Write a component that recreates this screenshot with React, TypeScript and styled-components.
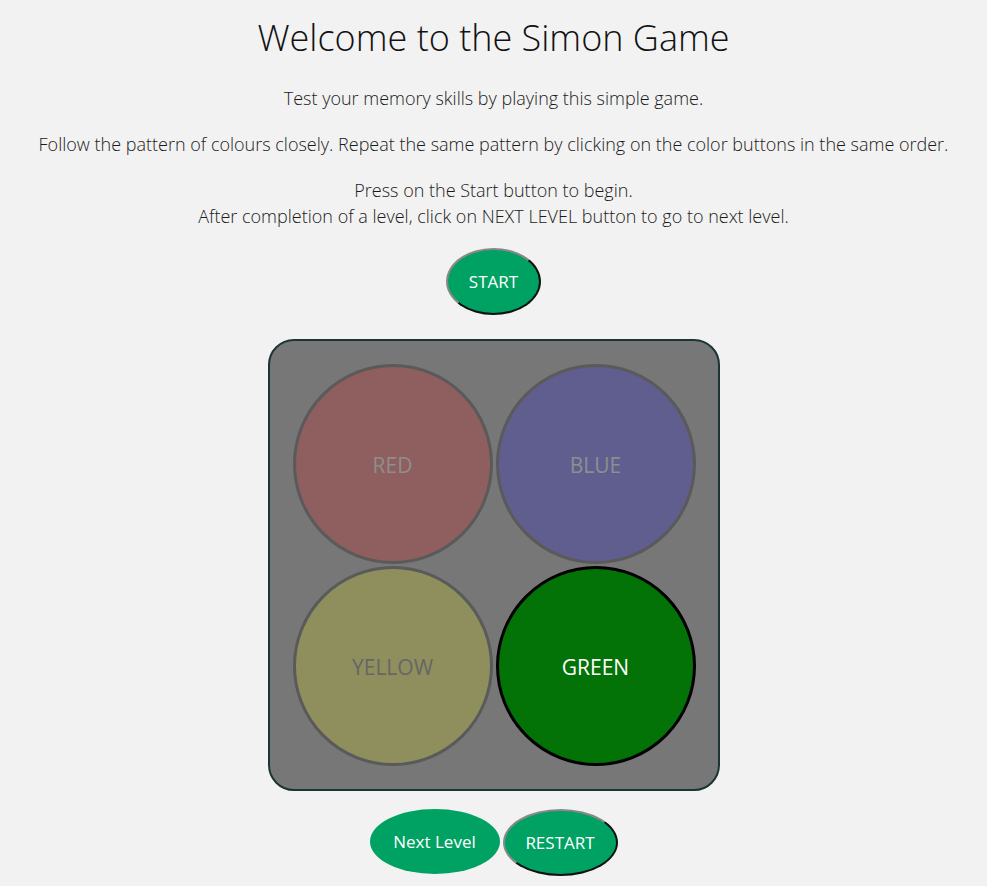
import React from "react";
import styled, { createGlobalStyle } from "styled-components";

const Global = createGlobalStyle`
  html, body { margin: 0; padding: 0; background: #f2f2f2; }
  body { font-family: "Open Sans", "Liberation Sans", sans-serif; font-weight: 300; color: #111; }
`;

const Page = styled.div`
  display: flex;
  flex-direction: column;
  align-items: center;
  text-align: center;
  padding-top: 12px;
`;

const Title = styled.h1`
  margin: 0 0 21px;
  font-size: 36px;
  font-weight: 300;
  line-height: 52px;
`;

const Para = styled.p`
  margin: 0 0 20px;
  font-size: 18px;
  line-height: 26px;
  color: #1a1a1a;
`;

const PillButton = styled.button<{ $bordered?: boolean }>`
  font-family: "Open Sans", "Liberation Sans", sans-serif;
  font-size: 17px;
  font-weight: 400;
  color: #fff;
  background: #00a263;
  border-radius: 50%;
  box-sizing: border-box;
  border: ${(p) => (p.$bordered ? "2px solid" : "none")};
  border-color: #888 #111 #111 #888;
  padding: 0;
  cursor: pointer;
`;

const StartButton = styled(PillButton)`
  width: 95px;
  height: 67px;
  margin-top: -1px;
`;

const Board = styled.div`
  margin-top: 24px;
  box-sizing: border-box;
  width: 452px;
  height: 452px;
  background: #777;
  border: 2px solid #1c3434;
  border-radius: 26px;
  padding: 23px 0 0 23px;
  display: grid;
  grid-template-columns: 200px 200px;
  grid-template-rows: 200px 200px;
  gap: 2px 3px;
`;

const Pad = styled.div<{ $bg: string; $fg: string; $active?: boolean }>`
  box-sizing: border-box;
  width: 200px;
  height: 200px;
  border-radius: 50%;
  background: ${(p) => p.$bg};
  border: 3px solid ${(p) => (p.$active ? "#000" : "#5a5a5a")};
  color: ${(p) => p.$fg};
  display: flex;
  align-items: center;
  justify-content: center;
  font-size: 21px;
  font-weight: 400;
  padding-top: 2px;
`;

const Controls = styled.div`
  margin-top: 18px;
  display: flex;
  gap: 3px;
  align-items: flex-start;
`;

const NextButton = styled(PillButton)`
  width: 130px;
  height: 65px;
`;

const RestartButton = styled(PillButton)`
  width: 115px;
  height: 67px;
`;

export default function App() {
  return (
    <>
      <Global />
      <Page>
        <Title>Welcome to the Simon Game</Title>
        <Para>Test your memory skills by playing this simple game.</Para>
        <Para>
          Follow the pattern of colours closely. Repeat the same pattern by clicking on the color buttons in the same order.
        </Para>
        <Para>
          Press on the Start button to begin.
          <br />
          After completion of a level, click on NEXT LEVEL button to go to next level.
        </Para>
        <StartButton $bordered>START</StartButton>
        <Board>
          <Pad $bg="#8f5e5e" $fg="#8e8e8e">RED</Pad>
          <Pad $bg="#5f5e8f" $fg="#8e8e8e">BLUE</Pad>
          <Pad $bg="#8f8f5e" $fg="#666">YELLOW</Pad>
          <Pad $bg="#037207" $fg="#fff" $active>GREEN</Pad>
        </Board>
        <Controls>
          <NextButton>Next Level</NextButton>
          <RestartButton $bordered>RESTART</RestartButton>
        </Controls>
      </Page>
    </>
  );
}
